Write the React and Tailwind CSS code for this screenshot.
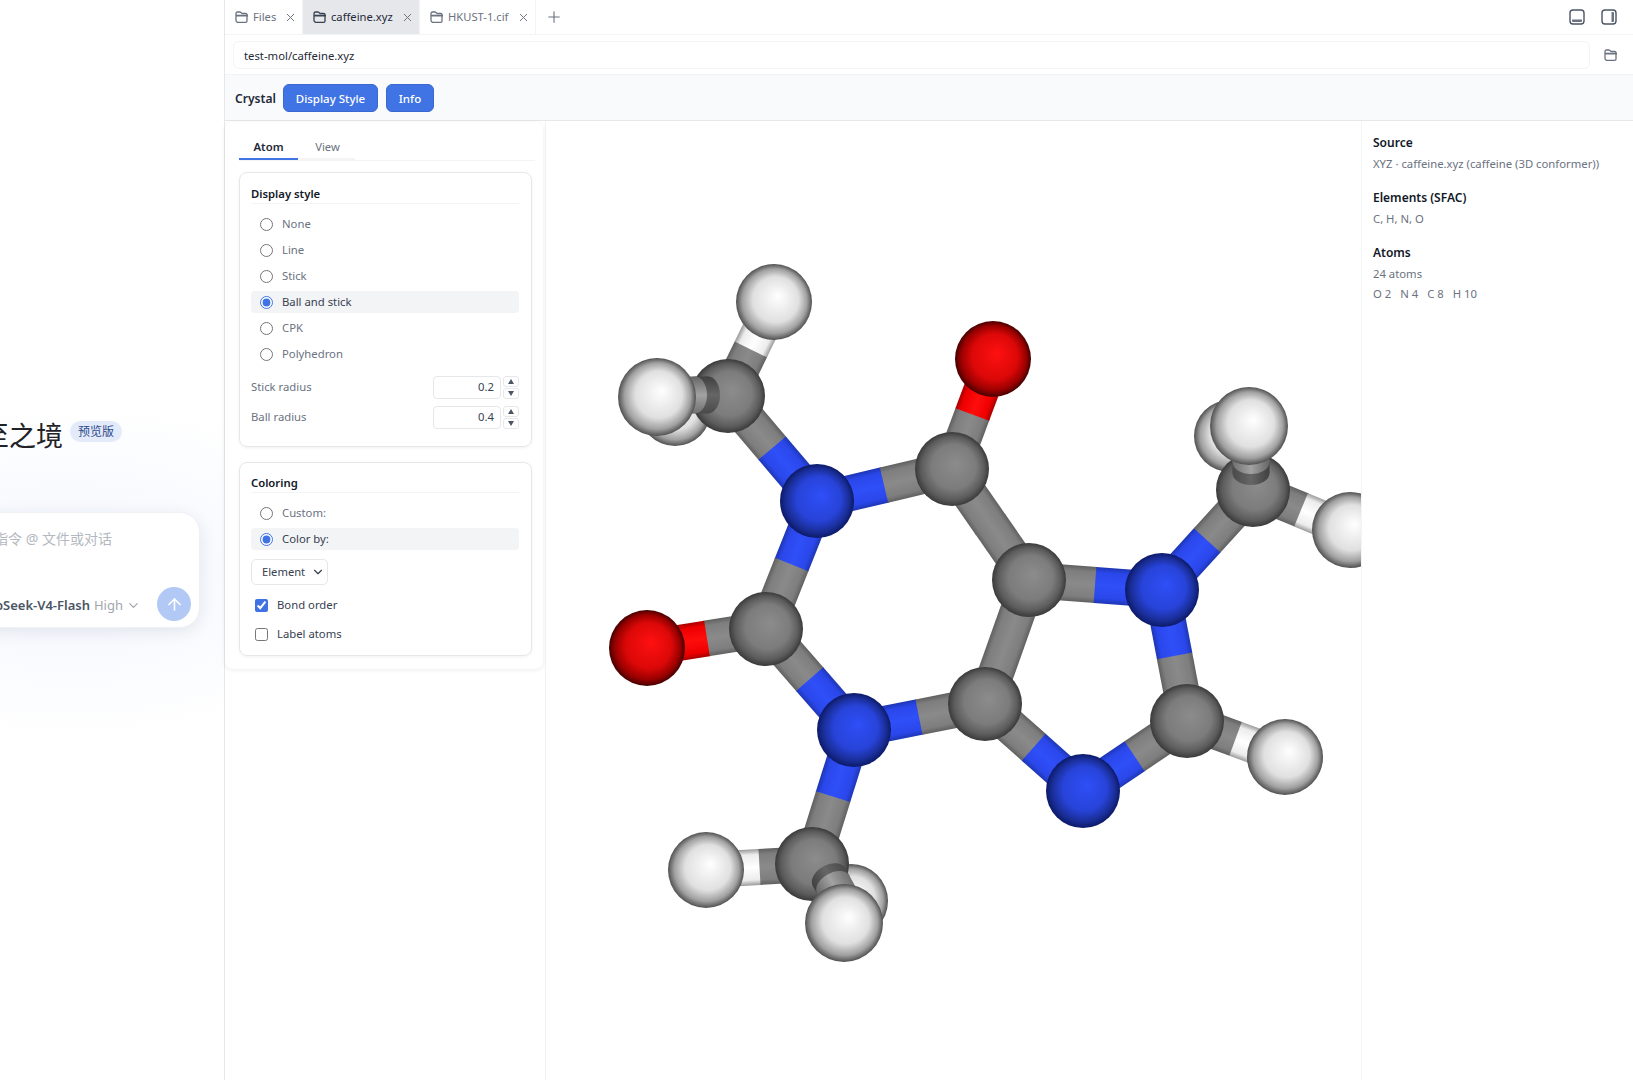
import React from 'react';
import { X, Plus, ArrowUp, ChevronDown } from 'lucide-react';

const FolderIcon = ({ dark }) => (
  <svg width="14" height="12" viewBox="0 0 14 12" fill="none" stroke={dark ? '#374151' : '#6b7280'} strokeWidth="1.3" className="shrink-0">
    <path d="M1 2.3c0-.7.6-1.3 1.3-1.3h2.6c.4 0 .7.2 1 .4l.8.8c.2.2.5.3.8.3h3.2c.7 0 1.3.6 1.3 1.3v6.2c0 .7-.6 1.3-1.3 1.3H2.3C1.6 10.8 1 10.2 1 9.5z" />
    <path d="M1 4.6h12" strokeWidth="1.8" />
  </svg>
);

const Tab = ({ label, active, width }) => (
  <div className={`flex items-center gap-[4px] pl-[10px] border-r border-[#f3f4f6] ${width} ${active ? 'bg-[#e5e7eb] text-[#1f2937]' : 'text-[#6b7280]'}`}>
    <FolderIcon dark={active} />
    <span className="text-[11.2px] leading-none whitespace-nowrap">{label}</span>
    <X size={13} strokeWidth={1.8} className="ml-auto mr-[5px] text-[#6b7280]" />
  </div>
);

const RadioRow = ({ label, checked }) => (
  <label className={`flex items-center h-[22px] mb-[4px] rounded-[4px] pl-[9px] gap-[9px] text-[11.3px] ${checked ? 'bg-[#f3f4f6] text-[#374151]' : 'text-[#6b7280]'}`}>
    <input type="radio" checked={!!checked} readOnly className="m-0 w-[13px] h-[13px] accent-[#3f73e4]" />
    {label}
  </label>
);

const Spinner = () => (
  <div className="flex flex-col gap-[1px] w-[16px]">
    <div className="flex items-center justify-center h-[11px] border border-[#e5e7eb] rounded-[3px]">
      <svg width="6" height="5" viewBox="0 0 6 5"><path d="M3 0l3 5H0z" fill="#4b5563" /></svg>
    </div>
    <div className="flex items-center justify-center h-[11px] border border-[#e5e7eb] rounded-[3px]">
      <svg width="6" height="5" viewBox="0 0 6 5"><path d="M3 5l3-5H0z" fill="#4b5563" /></svg>
    </div>
  </div>
);

const NumberRow = ({ label, value }) => (
  <div className="flex items-center h-[24px] text-[11.3px] text-[#6b7280]">
    <span>{label}</span>
    <div className="ml-auto w-[68px] h-[23px] flex items-center justify-end pr-[6px] border border-[#e5e7eb] rounded-[4px] text-[#374151]">{value}</div>
    <div className="ml-[2px]"><Spinner /></div>
  </div>
);

const SectionTitle = ({ children }) => (
  <div className="h-[18px] mb-[9px] border-b border-[#f3f4f6] text-[11.3px] font-semibold leading-[16px] text-[#111827]">{children}</div>
);

// atoms in page coordinates
const A = {
  cTL: [728, 395], h1: [774, 301], h2: [657, 396], h3: [675, 409],
  n1: [817, 500], c2: [952, 468], o1: [993, 358], c3: [1029, 579],
  c4: [766, 628], o2: [647, 647], n2: [854, 729], cB: [812, 863],
  hB1: [706, 869], hB2: [844, 922], hB3: [851, 900], c7: [985, 703],
  n3: [1162, 589], cR: [1253, 489], hR1: [1249, 425], hR2: [1230, 435],
  hR3: [1350, 529], c6: [1187, 720], h6: [1285, 756], n4: [1083, 790],
};

const kind = (id) => (id[0] === 'c' ? 'c' : id[0]);
const radius = { c: 37, n: 37, o: 38, h: 38 };

const bonds = [
  ['cTL', 'h1'], ['cTL', 'n1'], ['n1', 'c2'], ['n1', 'c4'], ['c2', 'o1'], ['c2', 'c3'],
  ['c3', 'n3'], ['c3', 'c7'], ['c4', 'o2'], ['c4', 'n2'], ['n2', 'c7'], ['n2', 'cB'],
  ['c7', 'n4'], ['n4', 'c6'], ['c6', 'n3'], ['c6', 'h6'], ['n3', 'cR'], ['cR', 'hR3'], ['cB', 'hB1'],
];

const Half = ({ from, to, k }) => {
  const dx = to[0] - from[0];
  const dy = to[1] - from[1];
  const len = Math.hypot(dx, dy);
  const ang = (Math.atan2(dy, dx) * 180) / Math.PI;
  return (
    <g transform={`translate(${from[0]} ${from[1]}) rotate(${ang})`}>
      <rect x="0" y="-18" width={len + 0.5} height="36" fill={`url(#bond-${k})`} />
    </g>
  );
};

const Bond = ({ a, b }) => {
  const mid = [(A[a][0] + A[b][0]) / 2, (A[a][1] + A[b][1]) / 2];
  return (
    <>
      <Half from={A[a]} to={mid} k={kind(a)} />
      <Half from={A[b]} to={mid} k={kind(b)} />
    </>
  );
};

const Atom = ({ id, r }) => (
  <circle cx={A[id][0]} cy={A[id][1]} r={r || radius[kind(id)]} fill={`url(#atom-${kind(id)})`} />
);

// short bond pointing at the viewer, seen end on
const Stub = ({ x, y, ang, gap = 13 }) => (
  <g transform={`translate(${x} ${y}) rotate(${ang})`}>
    <ellipse cx="0" cy="0" rx="12" ry="18.5" fill="url(#stub-dark)" />
    <rect x="0" y="-18.5" width={gap} height="37" fill="url(#stub-dark)" />
    <ellipse cx={gap} cy="0" rx="12" ry="18.5" fill="url(#stub-light)" />
    <rect x={gap} y="-18.5" width="22" height="37" fill="url(#stub-light)" />
  </g>
);

const stops = {
  c: ['#606060', '#7e7e7e', '#8a8a8a'],
  n: ['#1e36b4', '#2a47ea', '#2f4ff8'],
  o: ['#a80000', '#ee0000', '#ff0d0d'],
  h: ['#9a9a9a', '#ececec', '#ffffff'],
};

const sphere = {
  c: ['#8c8c8c', '#7c7c7c', '#5c5c5c', '#3a3a3a'],
  n: ['#2f4ff8', '#2743d8', '#1a2e98', '#0c1a68'],
  o: ['#ff1010', '#dc0808', '#9c0000', '#460000'],
  h: ['#ffffff', '#e0e0e0', '#a0a0a0', '#505050'],
};

const Molecule = () => (
  <svg width="815" height="960" viewBox="546 120 815 960" className="block">
    <defs>
      {Object.keys(stops).map((k) => (
        <linearGradient key={k} id={`bond-${k}`} x1="0" y1="0" x2="0" y2="1">
          <stop offset="0" stopColor={stops[k][0]} />
          <stop offset="0.15" stopColor={stops[k][1]} />
          <stop offset="0.5" stopColor={stops[k][2]} />
          <stop offset="0.85" stopColor={stops[k][1]} />
          <stop offset="1" stopColor={stops[k][0]} />
        </linearGradient>
      ))}
      {Object.keys(sphere).map((k) => (
        <radialGradient key={k} id={`atom-${k}`} cx="0.5" cy="0.5" r="0.5" fx="0.56" fy="0.42">
          <stop offset="0" stopColor={sphere[k][0]} />
          <stop offset="0.6" stopColor={sphere[k][1]} />
          <stop offset="0.85" stopColor={sphere[k][2]} />
          <stop offset="1" stopColor={sphere[k][3]} />
        </radialGradient>
      ))}
      <linearGradient id="stub-dark" x1="0" y1="0" x2="0" y2="1">
        <stop offset="0" stopColor="#4a4a4a" />
        <stop offset="0.5" stopColor="#666666" />
        <stop offset="1" stopColor="#404040" />
      </linearGradient>
      <linearGradient id="stub-light" x1="0" y1="0" x2="0" y2="1">
        <stop offset="0" stopColor="#707070" />
        <stop offset="0.5" stopColor="#a2a2a2" />
        <stop offset="1" stopColor="#666666" />
      </linearGradient>
    </defs>

    <Atom id="h3" r={36} />
    <Atom id="hR2" r={36} />
    <Atom id="hB3" r={37} />
    {bonds.map(([a, b]) => (
      <Bond key={a + b} a={a} b={b} />
    ))}
    {['cTL', 'n1', 'c2', 'o1', 'c3', 'c4', 'o2', 'n2', 'cB', 'c7', 'n3', 'cR', 'c6', 'n4', 'h1', 'h6', 'hR3', 'hB1'].map((id) => (
      <Atom key={id} id={id} />
    ))}
    <Stub x={708} y={394} ang={180} />
    <Stub x={1251} y={472} ang={-90} gap={11} />
    <Stub x={829} y={876} ang={61} gap={9} />
    <Atom id="h2" r={39} />
    <Atom id="hR1" r={39} />
    <Atom id="hB2" r={39} />
  </svg>
);

const InfoBlock = ({ title, children }) => (
  <div className="mb-[14px]">
    <div className="text-[12px] font-semibold leading-[20px] text-[#111827]">{title}</div>
    <div className="text-[11.3px] leading-[20px] mt-[1px] text-[#6b7280]">{children}</div>
  </div>
);

export default function App() {
  return (
    <div className="flex w-full h-[1080px] overflow-hidden bg-white font-['Noto_Sans','Noto_Sans_CJK_SC',sans-serif]">
      {/* chat side, cut off on the left */}
      <aside className="w-[225px] shrink-0 border-r border-[#e5e7eb] overflow-hidden flex flex-col items-end pt-[419px] bg-[radial-gradient(ellipse_330px_170px_at_70px_570px,#f3f6fd_0%,#ffffff_100%)]">
        <div className="flex items-center h-[34px] mr-[102px] whitespace-nowrap">
          <span className="text-[27px] leading-none -mt-[2px] text-[#1f2328]">臻至之境</span>
          <span className="ml-[7px] -mt-[9px] px-[8px] h-[21px] flex items-center rounded-full bg-[#e3ebfa] text-[12px] text-[#2d4a8a]">预览版</span>
        </div>
        <div className="shrink-0 w-[600px] h-[116px] mt-[59px] mr-[24px] rounded-[20px] bg-white shadow-[0_4px_16px_rgba(30,50,100,0.10)] border border-[#f0f1f4] flex flex-col items-end">
          <div className="mt-[14px] mr-[87px] text-[14px] leading-[24px] text-[#b4b8c0] whitespace-nowrap">输入指令 @ 文件或对话</div>
          <div className="mt-auto mb-[6px] mr-[8px] flex items-center whitespace-nowrap">
            <span className="mt-[3px] text-[13px] font-semibold text-[#4b5563]">DeepSeek-V4-Flash</span>
            <span className="mt-[3px] ml-[4px] text-[13px] text-[#a3a7ae]">High</span>
            <ChevronDown size={15} className="mt-[3px] ml-[3px] text-[#a3a7ae]" />
            <span className="ml-[16px] w-[34px] h-[34px] rounded-full bg-[#b3c9f5] flex items-center justify-center">
              <ArrowUp size={19} className="text-white" />
            </span>
          </div>
        </div>
      </aside>

      <main className="flex-1 min-w-0 flex flex-col">
        {/* tabs */}
        <div className="flex h-[35px] shrink-0 border-b border-[#f3f4f6]">
          <Tab label="Files" width="w-[78px]" />
          <Tab label="caffeine.xyz" width="w-[117px]" active />
          <Tab label="HKUST-1.cif" width="w-[116px]" />
          <div className="flex items-center ml-[9px] text-[#6b7280]"><Plus size={18} strokeWidth={1.5} /></div>
          <div className="ml-auto flex items-center gap-[16px] pr-[16px]">
            <svg width="16" height="16" viewBox="0 0 16 16" fill="none">
              <rect x="1" y="1" width="14" height="14" rx="3" stroke="#4b5563" strokeWidth="1.4" />
              <path d="M3 10.5h10V12a1 1 0 0 1-1 1H4a1 1 0 0 1-1-1z" fill="#6b7280" />
            </svg>
            <svg width="16" height="16" viewBox="0 0 16 16" fill="none">
              <rect x="1" y="1" width="14" height="14" rx="3" stroke="#4b5563" strokeWidth="1.4" />
              <path d="M10.5 3H12a1 1 0 0 1 1 1v8a1 1 0 0 1-1 1h-1.5z" fill="#6b7280" />
            </svg>
          </div>
        </div>

        {/* path */}
        <div className="flex items-center h-[40px] shrink-0 pl-[8px] pr-[15px] border-b border-[#f3f4f6]">
          <div className="flex-1 h-[28px] flex items-center pl-[10px] pt-[3px] border border-[#f3f4f6] rounded-[6px] text-[11.3px] text-[#1f2937]">test-mol/caffeine.xyz</div>
          <div className="ml-[14px]"><FolderIcon /></div>
        </div>

        {/* toolbar */}
        <div className="flex items-center h-[46px] shrink-0 pl-[10px] gap-[7px] bg-[#f9fafb] border-b border-[#e5e7eb]">
          <span className="pt-[4px] text-[12.1px] font-semibold text-[#1f2937]">Crystal</span>
          <button className="w-[95px] h-[28px] pt-[2px] rounded-[6px] bg-[#4073e3] border border-[#3a68d0] text-white text-[11.5px] font-medium">Display Style</button>
          <button className="ml-[1px] w-[48px] h-[28px] pt-[2px] rounded-[6px] bg-[#4073e3] border border-[#3a68d0] text-white text-[11.5px] font-medium">Info</button>
        </div>

        <div className="flex flex-1 min-h-0">
          {/* settings */}
          <div className="w-[321px] shrink-0 border-r border-[#f0f1f3]">
            <div className="w-[318px] h-[547px] mt-[1px] rounded-[8px] bg-white shadow-[0_1px_5px_rgba(0,0,0,0.08)] pl-[14px] pr-[11px] pt-[17px]">
              <div className="flex h-[22px] mr-[-3px] border-b border-[#f3f4f6] text-[11.3px]">
                <div className="w-[59px] flex justify-center font-semibold text-[#1f2937] border-b-2 border-[#4073e3]">Atom</div>
                <div className="w-[55px] ml-[2px] flex justify-center text-[#6b7280] border-b-2 border-[#f3f4f6]">View</div>
              </div>
              <section className="mt-[11px] h-[275px] rounded-[8px] border border-[#e5e7eb] shadow-[0_1px_3px_rgba(0,0,0,0.06)] pl-[11px] pr-[12px] pt-[13px]">
                <SectionTitle>Display style</SectionTitle>
                <RadioRow label="None" />
                <RadioRow label="Line" />
                <RadioRow label="Stick" />
                <RadioRow label="Ball and stick" checked />
                <RadioRow label="CPK" />
                <RadioRow label="Polyhedron" />
                <div className="mt-[10px] flex flex-col gap-[6px]">
                  <NumberRow label="Stick radius" value="0.2" />
                  <NumberRow label="Ball radius" value="0.4" />
                </div>
              </section>
              <section className="mt-[15px] h-[194px] rounded-[8px] border border-[#e5e7eb] shadow-[0_1px_3px_rgba(0,0,0,0.06)] pl-[11px] pr-[12px] pt-[12px]">
                <SectionTitle>Coloring</SectionTitle>
                <RadioRow label="Custom:" />
                <RadioRow label="Color by:" checked />
                <div className="mt-[9px] w-[77px] h-[26px] pl-[10px] pr-[2px] flex items-center justify-between rounded-[5px] border border-[#e5e7eb] bg-white text-[11.2px] text-[#374151]">
                  Element
                  <ChevronDown size={14} className="text-[#374151]" />
                </div>
                <label className="mt-[10px] flex items-center h-[20px] pl-[4px] gap-[9px] text-[11.3px] text-[#374151]">
                  <input type="checkbox" checked readOnly className="m-0 w-[13px] h-[13px] accent-[#3f73e4]" />
                  Bond order
                </label>
                <label className="mt-[9px] flex items-center h-[20px] pl-[4px] gap-[9px] text-[11.3px] text-[#374151]">
                  <input type="checkbox" readOnly className="m-0 w-[13px] h-[13px]" />
                  Label atoms
                </label>
              </section>
            </div>
          </div>

          {/* viewer */}
          <div className="flex-1 min-w-0 overflow-hidden">
            <Molecule />
          </div>

          {/* structure info */}
          <div className="w-[272px] shrink-0 border-l border-[#f3f4f6] pl-[11px] pt-[12px]">
            <InfoBlock title="Source">XYZ · caffeine.xyz (caffeine (3D conformer))</InfoBlock>
            <InfoBlock title="Elements (SFAC)">C, H, N, O</InfoBlock>
            <InfoBlock title="Atoms">
              <div>24 atoms</div>
              <div className="flex gap-[9px]"><span>O 2</span><span>N 4</span><span>C 8</span><span>H 10</span></div>
            </InfoBlock>
          </div>
        </div>
      </main>
    </div>
  );
}
